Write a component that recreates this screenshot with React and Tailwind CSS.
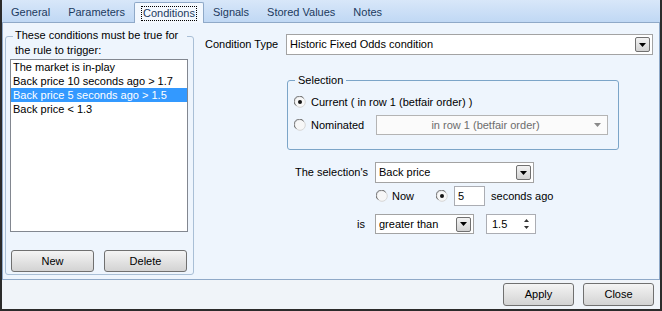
import React from 'react'

const tabs = ['General', 'Parameters', 'Conditions', 'Signals', 'Stored Values', 'Notes']
const conditions = [
  'The market is in-play',
  'Back price 10 seconds ago > 1.7',
  'Back price 5 seconds ago > 1.5',
  'Back price < 1.3',
]

function Arrow({ color = '#000' }) {
  return (
    <svg width="7" height="4" viewBox="0 0 7 4">
      <path d="M0 0h7L3.5 4z" fill={color} />
    </svg>
  )
}

function DropBtn() {
  return (
    <span className="flex h-[15px] w-[15px] shrink-0 items-center justify-center rounded-[2px] border border-[#707070] bg-linear-to-b from-[#f3f3f3] to-[#d2d2d2]">
      <Arrow />
    </span>
  )
}

function Combo({ value, className }) {
  return (
    <div className={`flex items-center border border-[#a3a3a3] bg-white pl-[3px] pr-[2px] ${className}`}>
      <span className="flex-1 truncate">{value}</span>
      <DropBtn />
    </div>
  )
}

function Radio({ checked }) {
  return (
    <svg width="12" height="12" viewBox="0 0 12 12" className="shrink-0">
      <circle cx="6" cy="6" r="5.3" fill="#f7f7f7" stroke="#d6d6d6" />
      <path d="M9.7 2.3A5.3 5.3 0 1 0 2.3 9.7" fill="none" stroke="#6d6d6d" />
      {checked && <circle cx="6" cy="6" r="2" fill="#141414" />}
    </svg>
  )
}

function Button({ children, className }) {
  return (
    <button
      type="button"
      className={`flex items-center justify-center rounded-[3px] border border-[#707070] bg-linear-to-b from-[#f4f4f4] to-[#d3d3d3] text-[11px] ${className}`}
    >
      {children}
    </button>
  )
}

export default function App() {
  return (
    <div className="flex h-[311px] w-[662px] flex-col overflow-hidden border-x-2 border-b-2 border-[#2b2b2b] bg-[#f0f4f9] font-['Liberation_Sans',Arial,sans-serif] text-[11px] text-black">
      {/* tab strip */}
      <div className="flex h-[22px] shrink-0 items-end bg-linear-to-b from-[#d8e7f9] to-[#c0d8f4]">
        {tabs.map((t) =>
          t === 'Conditions' ? (
            <div
              key={t}
              className="relative z-10 -mb-[1px] flex h-[21px] items-center rounded-t-[2px] border-x border-t border-[#8fa9c8] bg-[#f3f8fe] px-[6px] text-[#1c3a5e]"
            >
              <span className="border border-dotted border-black px-[1px] leading-[13px]">{t}</span>
            </div>
          ) : (
            <div key={t} className="flex h-[20px] items-center px-[9px] text-[#1c3a5e]">
              {t}
            </div>
          )
        )}
      </div>

      {/* tab page */}
      <div className="flex h-[258px] shrink-0 border border-[#8fa9c8] bg-[#eef5fd]">
        {/* conditions group */}
        <div className="relative ml-[2px] mt-[13px] h-[239px] w-[189px] shrink-0 rounded-[3px] border border-[#a9bfd6]">
          <div className="absolute left-[7px] top-[-9px] w-[174px] bg-[#eef5fd] px-[2px] leading-[15px]">
            These conditions must be true for the rule to trigger:
          </div>
          <div className="ml-[4px] mt-[22px] h-[173px] w-[178px] border border-[#828790] bg-white leading-[14px]">
            {conditions.map((c, i) => (
              <div key={c} className={i === 2 ? 'bg-[#3399ff] pl-[2px] text-white' : 'pl-[2px]'}>
                {c}
              </div>
            ))}
          </div>
          <div className="ml-[5px] mt-[18px] flex gap-[10px]">
            <Button className="h-[22px] w-[83px]">New</Button>
            <Button className="h-[22px] w-[83px]">Delete</Button>
          </div>
        </div>

        {/* condition editor */}
        <div className="flex-1 pl-[11px] pt-[11px]">
          <div className="flex h-[21px] items-center">
            <span className="w-[81px]">Condition Type</span>
            <Combo value="Historic Fixed Odds condition" className="h-[21px] w-[367px]" />
          </div>

          <div className="relative ml-[82px] mt-[25px] h-[70px] w-[332px] rounded-[3px] border border-[#7ca5c8]">
            <span className="absolute left-[7px] top-[-8px] bg-[#eef5fd] px-[3px] leading-[14px]">Selection</span>
            <div className="pl-[6px] pt-[14px]">
              <div className="flex h-[14px] items-center">
                <Radio checked />
                <span className="ml-[5px]">Current ( in row 1 (betfair order) )</span>
              </div>
              <div className="mt-[6px] flex h-[20px] items-center">
                <Radio />
                <span className="ml-[5px] w-[65px]">Nominated</span>
                <div className="flex h-[20px] w-[232px] items-center border border-[#b4b4b4] bg-[#fbfbfb] pr-[6px] text-[#6d6d6d]">
                  <span className="flex-1 text-center">in row 1 (betfair order)</span>
                  <Arrow color="#8a8a8a" />
                </div>
              </div>
            </div>
          </div>

          <div className="mt-[12px] flex h-[21px] items-center">
            <span className="w-[163px] text-right">The selection's</span>
            <Combo value="Back price" className="ml-[7px] h-[21px] w-[159px]" />
          </div>

          <div className="mt-[3px] flex h-[20px] items-center pl-[171px]">
            <Radio />
            <span className="ml-[4px]">Now</span>
            <span className="ml-[22px]">
              <Radio checked />
            </span>
            <div className="ml-[6px] flex h-[20px] w-[31px] items-center border border-[#abadb3] bg-white pl-[3px]">5</div>
            <span className="ml-[6px]">seconds ago</span>
          </div>

          <div className="mt-[8px] flex h-[20px] items-center">
            <span className="w-[163px] pr-[3px] text-right">is</span>
            <Combo value="greater than" className="ml-[7px] h-[20px] w-[99px]" />
            <div className="ml-[12px] flex h-[20px] w-[50px] items-center border border-[#abadb3] bg-white pl-[5px] pr-[6px]">
              <span className="flex-1">1.5</span>
              <span className="flex flex-col gap-[4px]">
                <svg width="5" height="3" viewBox="0 0 5 3">
                  <path d="M0 3h5L2.5 0z" fill="#333" />
                </svg>
                <svg width="5" height="3" viewBox="0 0 5 3">
                  <path d="M0 0h5L2.5 3z" fill="#333" />
                </svg>
              </span>
            </div>
          </div>
        </div>
      </div>

      {/* footer */}
      <div className="flex flex-1 items-start justify-end gap-[9px] pr-[6px] pt-[3px]">
        <Button className="h-[23px] w-[71px]">Apply</Button>
        <Button className="h-[23px] w-[71px]">Close</Button>
      </div>
    </div>
  )
}
